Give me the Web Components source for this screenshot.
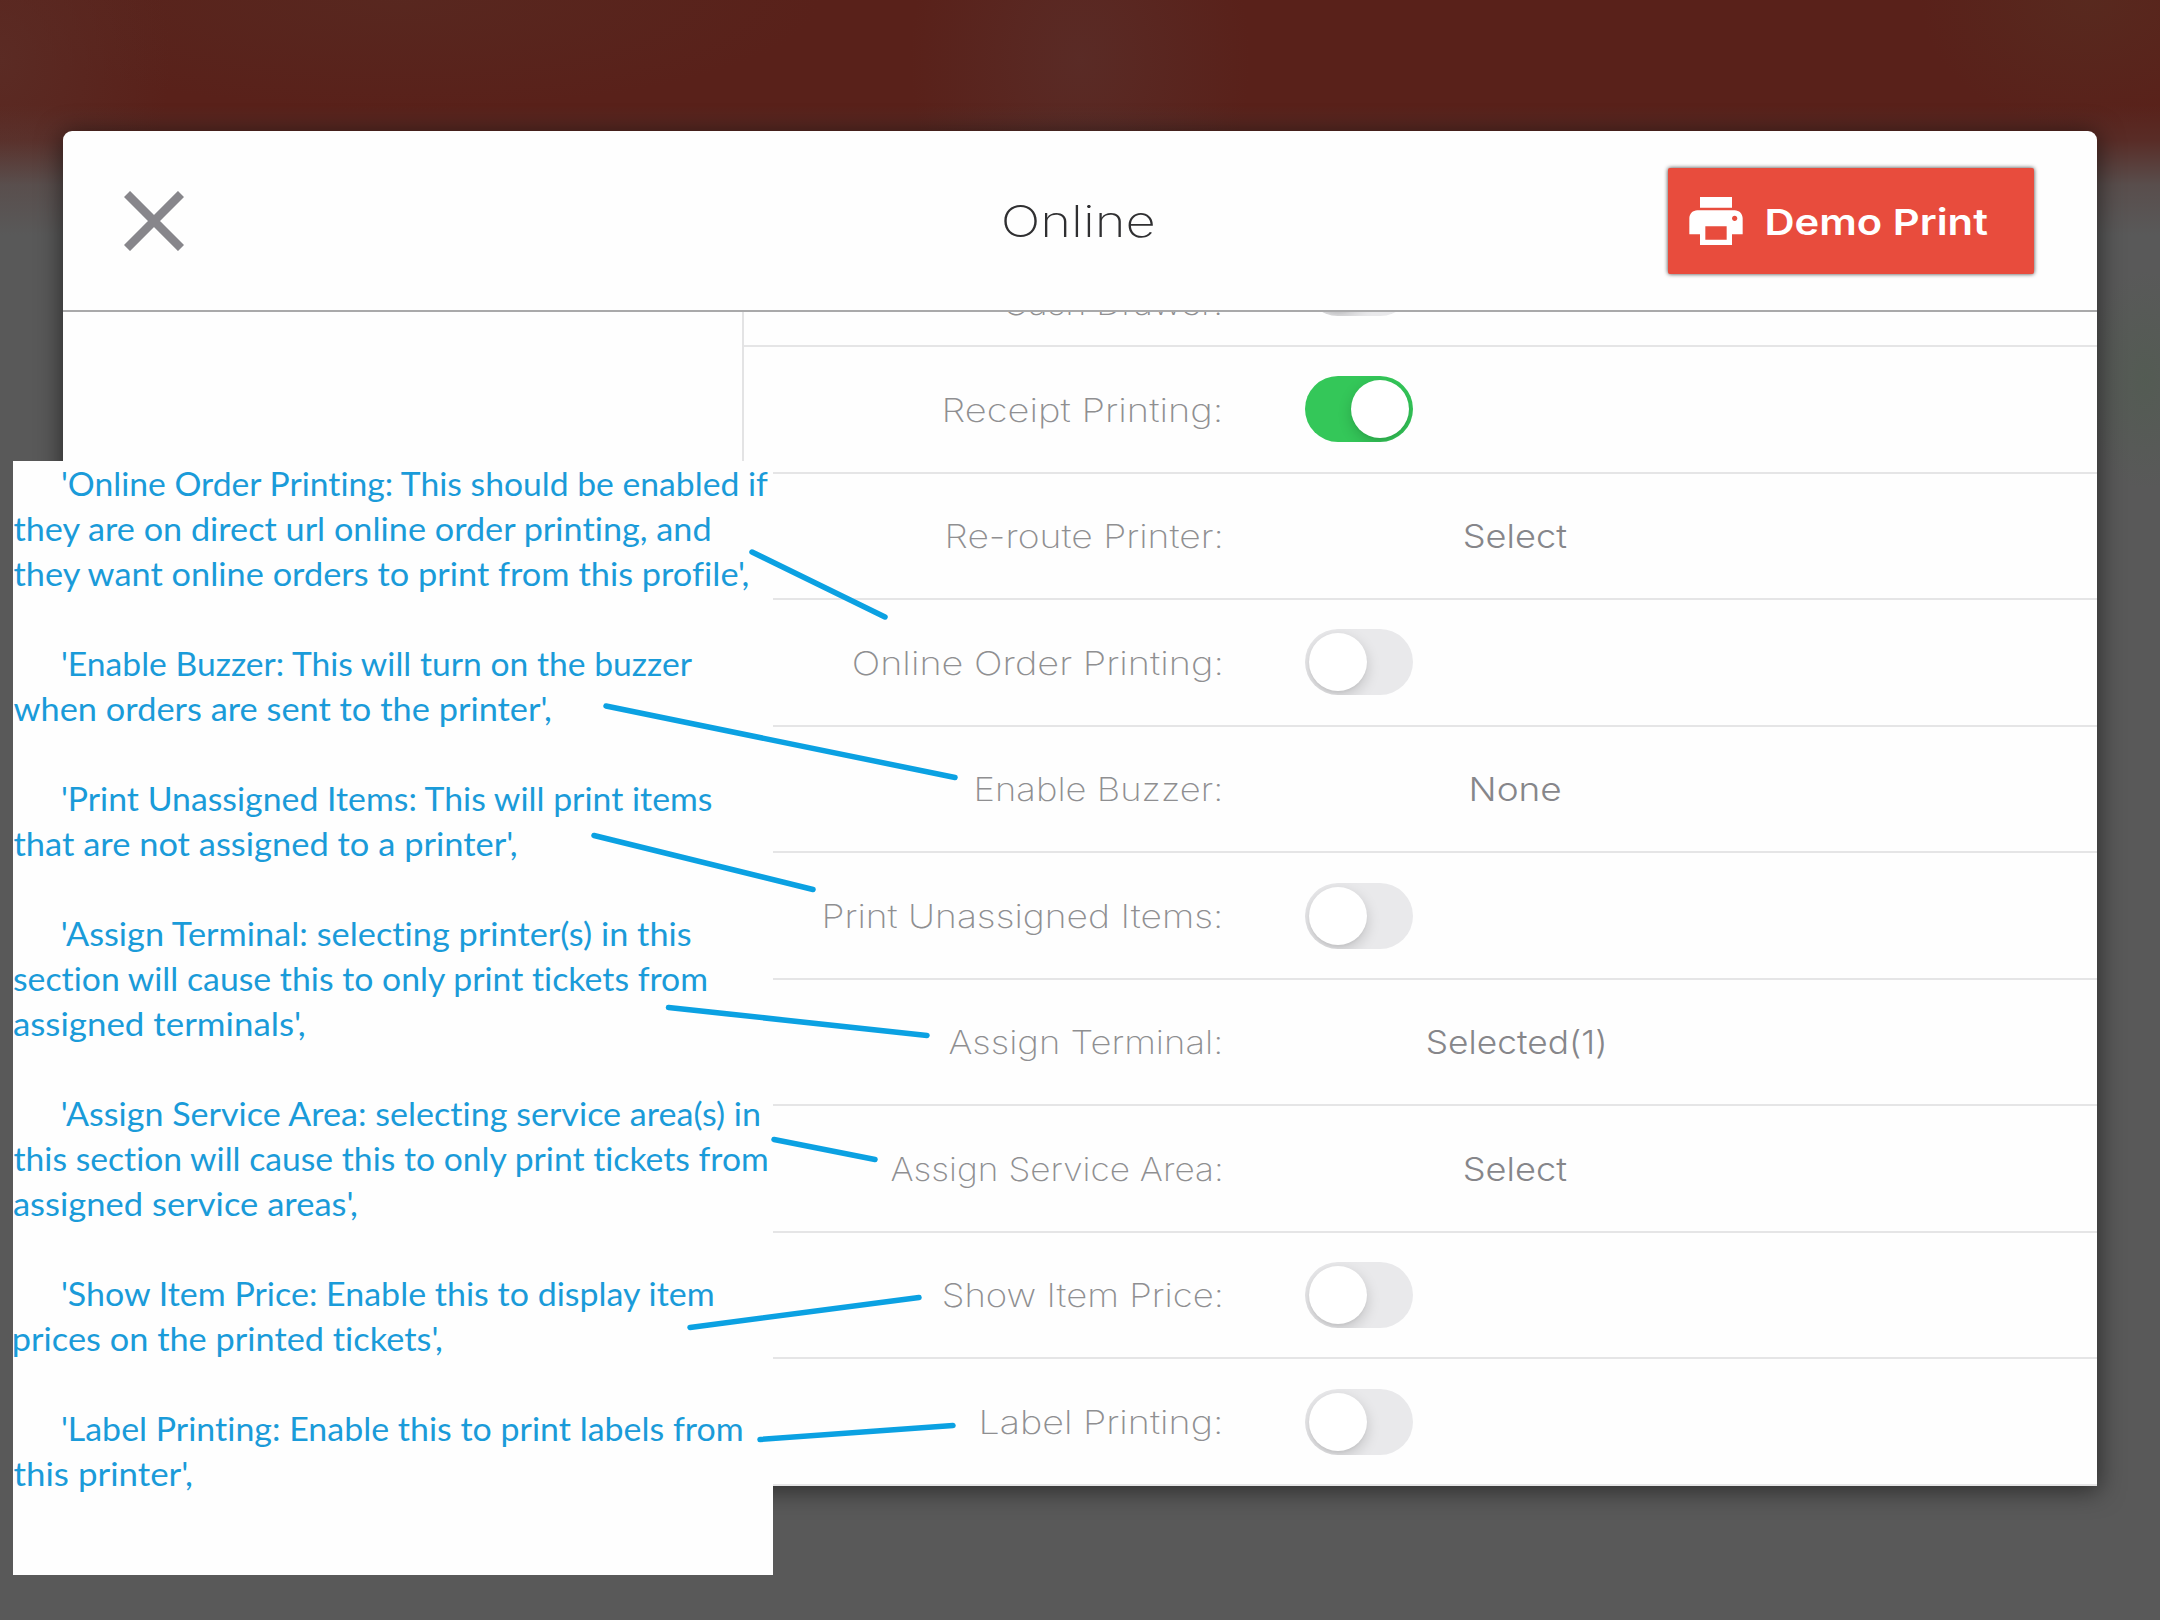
<!DOCTYPE html>
<html lang="en">
<head>
<meta charset="utf-8">
<title>Online</title>
<style>
  html, body { margin: 0; height: 100%; overflow: hidden; background: #595959; }
  body { font-family: Inter, "Open Sans", sans-serif; }
</style>
</head>
<body>
<profile-screen></profile-screen>

<script>
const define = (name, html, setup) => {
  const template = document.createElement('template');
  template.innerHTML = html.trim();
  customElements.define(name, class extends HTMLElement {
    connectedCallback() {
      if (this.shadowRoot) return;
      this.attachShadow({ mode: 'open' }).append(template.content.cloneNode(true));
      if (setup) setup(this, this.shadowRoot);
    }
  });
};

/* One line of text whose visible glyphs span exactly `w` pixels. */
const pen = document.createElement('canvas').getContext('2d');
define('fit-text', `
  <style>
    :host { display: block; flex: none; }
    span { display: block; width: max-content; white-space: nowrap; transform-origin: 0 50%;
      letter-spacing: .01px; font-variant-ligatures: none; }
  </style><span><slot></slot></span>`, (host, root) => {
  const w = +host.getAttribute('w');
  const cs = getComputedStyle(host);
  /* Measured at ten times the size, so that rounding of the glyph bounds does not show. */
  pen.font = `${cs.fontWeight} ${parseFloat(cs.fontSize) * 10}px ${cs.fontFamily}`;
  pen.letterSpacing = '0.1px';
  const m = pen.measureText(host.textContent);
  const left = m.actualBoundingBoxLeft / 10;
  const k = w / (m.actualBoundingBoxRight / 10 + left);
  host.style.width = w + 'px';
  root.querySelector('span').style.transform = `translateX(${left * k}px) scaleX(${k})`;
});

define('close-icon', `
  <style>:host { display: block; width: 60px; height: 60px; } svg { display: block; }</style>
  <svg width="60" height="60" viewBox="0 0 60 60" stroke="#87868b" stroke-width="8.6">
    <path d="M3 3L57 57M57 3L3 57"/>
  </svg>`);

define('print-button', `
  <style>
    :host { display: flex; align-items: center; box-sizing: border-box; width: 366px; height: 106px;
      padding-left: 16px; gap: 19px; background: #e84c3d; color: #fff; border-radius: 2px;
      box-shadow: 0 0 4px rgba(0,0,0,.75); font-size: 36px; font-weight: 570; line-height: 50px; }
    svg { display: block; flex: none; }
    fit-text { padding-top: 2px; }
  </style>
  <svg width="64" height="64" viewBox="0 0 24 24" fill="#fff">
    <path d="M19 8H5c-1.66 0-3 1.34-3 3v6h4v4h12v-4h4v-6c0-1.66-1.34-3-3-3zm-3 11H8v-5h8v5zm3-7c-.55 0-1-.45-1-1s.45-1 1-1 1 .45 1 1-.45 1-1 1zm-1-9H6v4h12V3z"/>
  </svg>
  <fit-text w="220.5">Demo Print</fit-text>`);

define('toggle-switch', `
  <style>
    :host { display: flex; box-sizing: border-box; width: 108px; height: 66px; padding: 4px;
      border-radius: 33px; background: #e9e9eb; overflow: hidden; }
    :host([on]) { background: #34c759; justify-content: flex-end; }
    i { width: 58px; height: 58px; border-radius: 50%; background: #fff;
      box-shadow: 0 5px 14px rgba(0,0,0,.17), 0 2px 2px rgba(0,0,0,.03); }
  </style><i></i>`);

define('setting-row', `
  <style>
    :host { display: grid; grid-template-columns: 476px 421px; column-gap: 85px; align-items: center;
      box-sizing: border-box; height: 126.55px; flex: none; border-bottom: 2px solid #e5e5e6;
      color: #8f8f91; font-size: 32.5px; font-weight: 250; line-height: 44px; }
    .label { display: flex; justify-content: flex-end; padding-top: var(--drop, 2.5px); }
    .control { display: flex; justify-content: center; color: #86868a; font-weight: 360; }
    .control fit-text { padding-top: 2.5px; }
    .control.start { justify-content: flex-start; }
  </style>
  <div class="label"></div><div class="control"><slot></slot></div>`, (host, root) => {
  const put = (box, text, w) => {
    const t = document.createElement('fit-text');
    t.setAttribute('w', w);
    t.textContent = text;
    box.append(t);
  };
  put(root.querySelector('.label'), host.getAttribute('label'), host.getAttribute('w'));
  const control = root.querySelector('.control');
  if (host.hasAttribute('value')) put(control, host.getAttribute('value'), host.getAttribute('vw'));
  else control.classList.add('start');
});

define('profile-dialog', `
  <style>
    :host { display: flex; flex-direction: column; box-sizing: border-box; width: 2034px; height: 1355px;
      background: #fefefe; border-radius: 9px 9px 0 0; box-shadow: 0 3px 24px 2px rgba(0,0,0,.5); }
    header { display: grid; grid-template-columns: 1fr auto 1fr; align-items: center; box-sizing: border-box;
      height: 181px; flex: none; padding: 0 63px 0 61px; border-bottom: 2px solid #a9a9aa; }
    header fit-text { font-size: 44px; font-weight: 250; line-height: 60px; color: #2f2f31; }
    print-button { justify-self: end; }
    .body { flex: 1; min-height: 0; display: flex; }
    .side { width: 679px; flex: none; }
    .rows { flex: 1; display: flex; flex-direction: column; justify-content: flex-end; overflow: hidden;
      border-left: 2px solid #e3e3e4; }
  </style>
  <header>
    <close-icon></close-icon>
    <fit-text w="149.5">Online</fit-text>
    <print-button></print-button>
  </header>
  <div class="body">
    <div class="side"></div>
    <div class="rows">
      <setting-row label="Cash Drawer:" w="215" style="--drop:43px"><toggle-switch></toggle-switch></setting-row>
      <setting-row label="Receipt Printing:" w="275"><toggle-switch on></toggle-switch></setting-row>
      <setting-row label="Re-route Printer:" w="272.5" value="Select" vw="101.5"></setting-row>
      <setting-row label="Online Order Printing:" w="366.5"><toggle-switch></toggle-switch></setting-row>
      <setting-row label="Enable Buzzer:" w="243" value="None" vw="88"></setting-row>
      <setting-row label="Print Unassigned Items:" w="395"><toggle-switch></toggle-switch></setting-row>
      <setting-row label="Assign Terminal:" w="271" value="Selected(1)" vw="176"></setting-row>
      <setting-row label="Assign Service Area:" w="329.5" value="Select" vw="101.5"></setting-row>
      <setting-row label="Show Item Price:" w="276.5"><toggle-switch></toggle-switch></setting-row>
      <setting-row label="Label Printing:" w="238"><toggle-switch></toggle-switch></setting-row>
    </div>
  </div>`);

define('note-block', `
  <style>
    :host { display: flex; flex-direction: column; }
    ::slotted(:first-child) { margin-left: 48.5px; }
  </style><slot></slot>`);

define('note-panel', `
  <style>
    :host { display: flex; flex-direction: column; gap: 45px; box-sizing: border-box; width: 760px; height: 1114px;
      background: #fefefe; color: #1a9bd9; font: 400 33.2px/45px Lato, Carlito, sans-serif; }
    note-block { margin-left: 1.3px; }
  </style>
  <note-block><fit-text w="706.6">'Online Order Printing: This should be enabled if</fit-text><fit-text w="697.4">they are on direct url online order printing, and</fit-text><fit-text w="735.7">they want online orders to print from this profile',</fit-text></note-block>
  <note-block><fit-text w="630.8">'Enable Buzzer: This will turn on the buzzer</fit-text><fit-text w="536.7">when orders are sent to the printer',</fit-text></note-block>
  <note-block><fit-text w="650.5">'Print Unassigned Items: This will print items</fit-text><fit-text w="502.5">that are not assigned to a printer',</fit-text></note-block>
  <note-block><fit-text w="629">'Assign Terminal: selecting printer(s) in this</fit-text><fit-text w="693.9">section will cause this to only print tickets from</fit-text><fit-text w="290.3">assigned terminals',</fit-text></note-block>
  <note-block><fit-text w="697.4">'Assign Service Area: selecting service area(s) in</fit-text><fit-text w="754.6">this section will cause this to only print tickets from</fit-text><fit-text w="342.7">assigned service areas',</fit-text></note-block>
  <note-block><fit-text w="651.5">'Show Item Price: Enable this to display item</fit-text><fit-text w="427.5">prices on the printed tickets',</fit-text></note-block>
  <note-block><fit-text w="679">'Label Printing: Enable this to print labels from</fit-text><fit-text w="177.5">this printer',</fit-text></note-block>`);

define('note-pointers', `
  <style>:host { display: block; } svg { display: block; }</style>
  <svg width="2160" height="1620" viewBox="0 0 2160 1620" fill="none" stroke="#0ba1e2" stroke-width="5.5" stroke-linecap="round">
    <path d="M752 552L885 617M606 706L955 777.5M594 835.5L813 889.5M668.5 1007.5L927 1035.5M774 1139.5L875 1159.5M690 1327.5L919 1297.5M760 1439.5L953 1425.5"/>
  </svg>`);

define('profile-screen', `
  <style>
    :host { display: block; position: relative; box-sizing: border-box; width: 2160px; height: 1620px;
      padding: 131px 63px; overflow: hidden;
      background:
        radial-gradient(ellipse 60px 110px at 2145px 380px, rgba(75,95,75,.4), transparent),
        linear-gradient(rgba(89,89,89,0) 105px, rgba(89,89,89,.2) 140px, rgba(89,89,89,.8) 185px, #595959 235px),
        radial-gradient(ellipse 170px 220px at 1080px 60px, rgba(90,44,39,.9), transparent),
        radial-gradient(ellipse 170px 220px at 0 60px, rgba(91,44,37,.9), transparent),
        radial-gradient(ellipse 170px 130px at 2090px 0, rgba(88,42,31,.9), transparent),
        radial-gradient(ellipse 420px 110px at 400px 0, rgba(88,40,32,.9), transparent),
        #59211a; }
    note-panel { position: absolute; left: 13px; top: 461px; }
    note-pointers { position: absolute; left: 0; top: 0; }
  </style>
  <profile-dialog></profile-dialog>
  <note-panel></note-panel>
  <note-pointers></note-pointers>`);
</script>
</body>
</html>
